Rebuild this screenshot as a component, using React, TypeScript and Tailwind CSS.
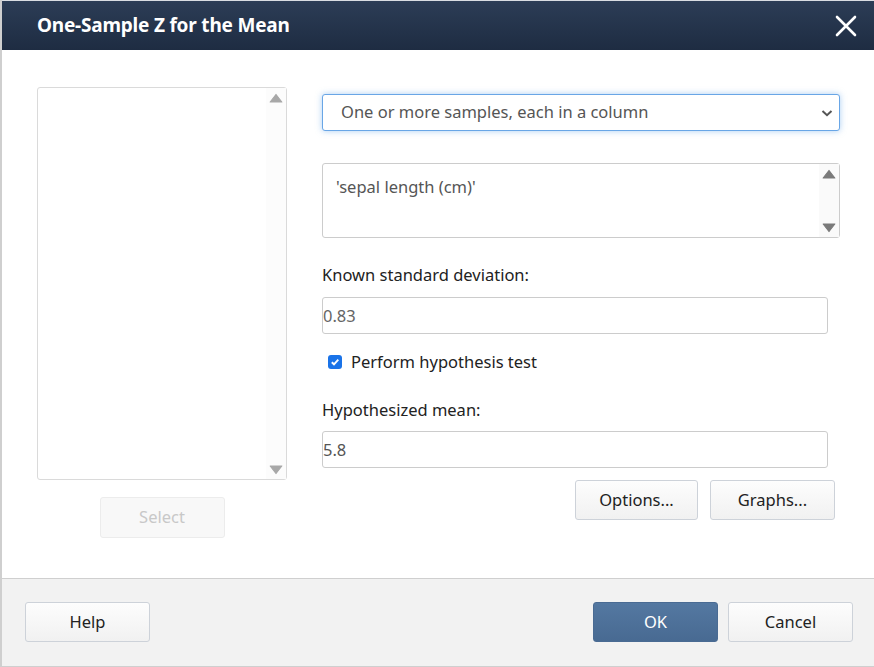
import React from "react";

const font = { fontFamily: '"Noto Sans", "Open Sans", Arial, sans-serif' };

function TriUp({ color }: { color: string }) {
  return (
    <svg width="14" height="10" viewBox="0 0 14 10">
      <path d="M1.2 9 L7 1.5 L12.8 9 Z" fill={color} stroke={color} strokeWidth="1.2" strokeLinejoin="round" />
    </svg>
  );
}
function TriDown({ color }: { color: string }) {
  return (
    <svg width="14" height="10" viewBox="0 0 14 10">
      <path d="M1.2 1 L7 8.5 L12.8 1 Z" fill={color} stroke={color} strokeWidth="1.2" strokeLinejoin="round" />
    </svg>
  );
}

function Btn({ children, w = "w-[125px]" }: { children: React.ReactNode; w?: string }) {
  return (
    <div
      className={
        "flex h-[40px] items-center justify-center rounded-[3px] border border-[#cdd2d9] bg-gradient-to-b from-[#fdfdfd] to-[#f1f1f1] text-[16.5px] text-[#222] " +
        w
      }
    >
      {children}
    </div>
  );
}

export default function App() {
  return (
    <div
      className="flex h-[667px] w-[874px] flex-col border-l-2 border-[#cfcfcf] bg-white"
      style={font}
    >
      {/* header */}
      <div className="flex h-[50px] shrink-0 items-center justify-between border-t border-[#d9dde2] bg-gradient-to-b from-[#2c3d56] to-[#1e2c42] pl-[35px] pr-[17px]">
        <div className="text-[19px] font-bold tracking-[-0.2px] text-white">One-Sample Z for the Mean</div>
        <svg width="22" height="22" viewBox="0 0 22 22">
          <path d="M2 2 L20 20 M20 2 L2 20" stroke="white" strokeWidth="2.6" strokeLinecap="round" />
        </svg>
      </div>

      {/* body */}
      <div className="flex flex-1 pl-[35px]">
        {/* left column */}
        <div className="flex w-[250px] flex-col items-center pt-[37px]">
          <div className="flex h-[393px] w-[250px] justify-end rounded-[3px] border border-[#dadada] bg-white">
            <div className="flex w-[20px] flex-col items-center justify-between bg-[#fcfcfc] pb-[4px] pt-[5px]">
              <TriUp color="#a8a8a8" />
              <TriDown color="#a8a8a8" />
            </div>
          </div>
          <div className="mt-[17px] flex h-[41px] w-[125px] items-center justify-center rounded-[3px] border border-[#ececec] bg-[#f8f8f8] text-[16.5px] text-[#c8c8c8]">
            Select
          </div>
        </div>

        {/* right column */}
        <div className="ml-[35px] flex w-[518px] flex-col pt-[44px]">
          <div className="flex h-[37px] items-center justify-between rounded-[3px] border border-[#69a6e6] bg-white pl-[18px] pr-[5px] shadow-[0_0_6px_rgba(102,165,232,0.55)]">
            <span className="text-[16.5px] text-[#555]">One or more samples, each in a column</span>
            <svg width="14" height="10" viewBox="0 0 14 10">
              <path d="M2.5 3 L7 7.2 L11.5 3" fill="none" stroke="#555" strokeWidth="2" />
            </svg>
          </div>

          <div className="mt-[32px] flex h-[75px] justify-between rounded-[3px] border border-[#cccccc] bg-white">
            <span className="pl-[13px] pt-[11px] text-[16.5px] leading-[24px] text-[#555]">'sepal length (cm)'</span>
            <div className="flex w-[20px] flex-col items-center justify-between bg-[#fafafa] pb-[4px] pt-[5px]">
              <TriUp color="#7a7a7a" />
              <TriDown color="#7a7a7a" />
            </div>
          </div>

          <div className="mt-[26px] text-[16.5px] leading-[22px] text-[#222]">Known standard deviation:</div>
          <div className="mt-[11px] flex h-[37px] w-[506px] items-center rounded-[3px] border border-[#cccccc] bg-white pt-[2px]">
            <span className="text-[16.5px] text-[#666]">0.83</span>
          </div>

          <div className="mt-[17px] flex h-[22px] items-center">
            <div className="ml-[6px] flex h-[14px] w-[14px] items-center justify-center rounded-[3px] bg-[#1a73e8]">
              <svg width="10" height="10" viewBox="0 0 10 10">
                <path d="M1.8 5.2 L4 7.3 L8.3 2.6" fill="none" stroke="white" strokeWidth="1.9" />
              </svg>
            </div>
            <span className="ml-[9px] text-[16.5px] text-[#222]">Perform hypothesis test</span>
          </div>

          <div className="mt-[26px] text-[16.5px] leading-[22px] text-[#222]">Hypothesized mean:</div>
          <div className="mt-[10px] flex h-[37px] w-[506px] items-center rounded-[3px] border border-[#cccccc] bg-white pt-[2px]">
            <span className="text-[16.5px] text-[#555]">5.8</span>
          </div>

          <div className="mt-[12px] flex w-[513px] justify-end gap-[12px]">
            <Btn w="w-[123px]">Options...</Btn>
            <Btn>Graphs...</Btn>
          </div>
        </div>
      </div>

      {/* footer */}
      <div className="flex h-[89px] shrink-0 items-start justify-between border-b border-t border-[#cfcfcf] bg-[#f2f2f2] pl-[23px] pr-[21px] pt-[23px]">
        <Btn>Help</Btn>
        <div className="flex gap-[10px]">
          <div className="flex h-[40px] w-[125px] items-center justify-center rounded-[3px] border border-[#4a6b93] bg-gradient-to-b from-[#5478a1] to-[#486a92] text-[16.5px] text-white">
            OK
          </div>
          <Btn>Cancel</Btn>
        </div>
      </div>
    </div>
  );
}
